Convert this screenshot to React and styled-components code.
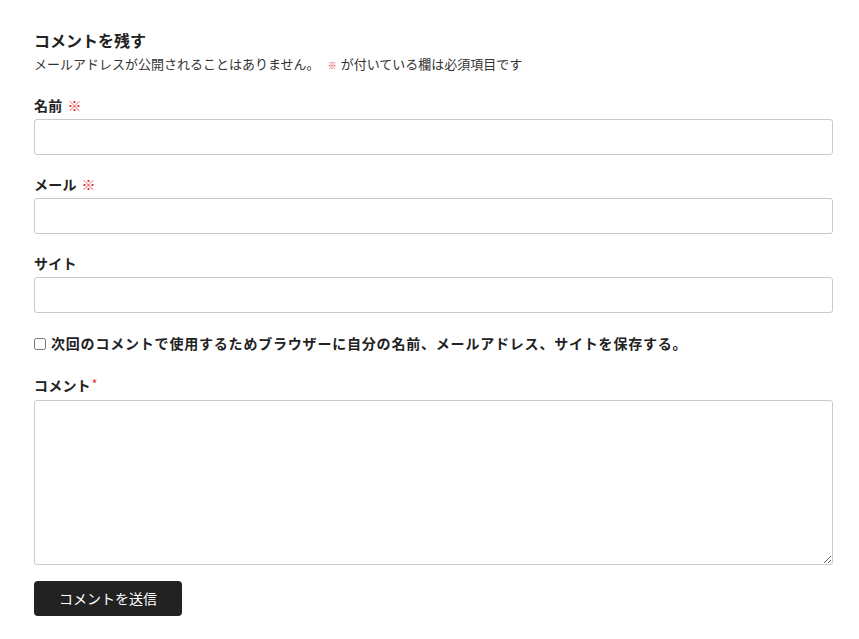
import React from 'react'
import styled, { createGlobalStyle } from 'styled-components'

const GlobalStyle = createGlobalStyle`
    body {
        margin: 0;
        background: #fff;
        color: #333;
        font-family: "Noto Sans CJK JP", "Noto Sans", sans-serif;
    }
    * { box-sizing: border-box; }
`

const Wrap = styled.form`
    width: 799px;
    margin: 0 0 0 34px;
    padding-top: 28px;
    display: flex;
    flex-direction: column;
`

const Title = styled.h3`
    margin: 0;
    font-size: 16px;
    line-height: 24px;
    font-weight: 700;
    color: #222;
`

const Notes = styled.p`
    margin: 2px 0 0;
    font-size: 13px;
    line-height: 19px;
    color: #333;
`

const Mark = styled.span`
    color: #e4202a;
    font-size: ${props => props.small ? '9px' : '14px'};
    margin: ${props => props.small ? '0 4px 0 8px' : '0 0 0 5px'};
    font-weight: 700;
`

const Star = styled.span`
    color: #e0282d;
    font-size: 12px;
    font-weight: 400;
    vertical-align: 2px;
    margin-left: 1px;
`

const Field = styled.div`
    display: flex;
    flex-direction: column;
    margin-top: ${props => props.gap || 20}px;
`

const Label = styled.label`
    font-size: 14px;
    line-height: 21px;
    font-weight: 700;
    color: #222;
    letter-spacing: 0.2px;
    margin-bottom: ${props => props.below || 2.5}px;
`

const Input = styled.input`
    width: 100%;
    height: 36px;
    border: 1px solid #c9c9ce;
    border-radius: 3px;
    padding: 0 8px;
    font-size: 14px;
    background: #fff;
`

const TextArea = styled.textarea`
    width: 100%;
    height: 165px;
    border: 1px solid #c9c9ce;
    border-radius: 3px;
    padding: 8px;
    font-size: 14px;
    display: block;
`

const CheckRow = styled.label`
    display: flex;
    align-items: center;
    margin-top: 20px;
    font-size: 14px;
    line-height: 21px;
    font-weight: 700;
    letter-spacing: 0.8px;
    color: #222;
`

const Box = styled.input`
    width: 12px;
    height: 12px;
    margin: 1px 5px 0 0;
    accent-color: #888;
`

const Submit = styled.button`
    align-self: flex-start;
    margin-top: 16px;
    width: 148px;
    height: 35px;
    border: none;
    border-radius: 4px;
    background: #222;
    color: #fff;
    font-family: inherit;
    font-size: 14px;
    cursor: pointer;
`

export default function App() {
    return (
        <>
            <GlobalStyle />
            <Wrap onSubmit={e => e.preventDefault()}>
                <Title>コメントを残す</Title>
                <Notes>
                    メールアドレスが公開されることはありません。
                    <Mark small>※</Mark>が付いている欄は必須項目です
                </Notes>
                <Field gap={20}>
                    <Label>名前<Mark>※</Mark></Label>
                    <Input type="text" />
                </Field>
                <Field gap={19.5}>
                    <Label>メール<Mark>※</Mark></Label>
                    <Input type="email" />
                </Field>
                <Field gap={19.5}>
                    <Label>サイト</Label>
                    <Input type="url" />
                </Field>
                <CheckRow>
                    <Box type="checkbox" />
                    次回のコメントで使用するためブラウザーに自分の名前、メールアドレス、サイトを保存する。
                </CheckRow>
                <Field gap={19}>
                    <Label below={4}>コメント<Star>*</Star></Label>
                    <TextArea />
                </Field>
                <Submit type="submit">コメントを送信</Submit>
            </Wrap>
        </>
    )
}
